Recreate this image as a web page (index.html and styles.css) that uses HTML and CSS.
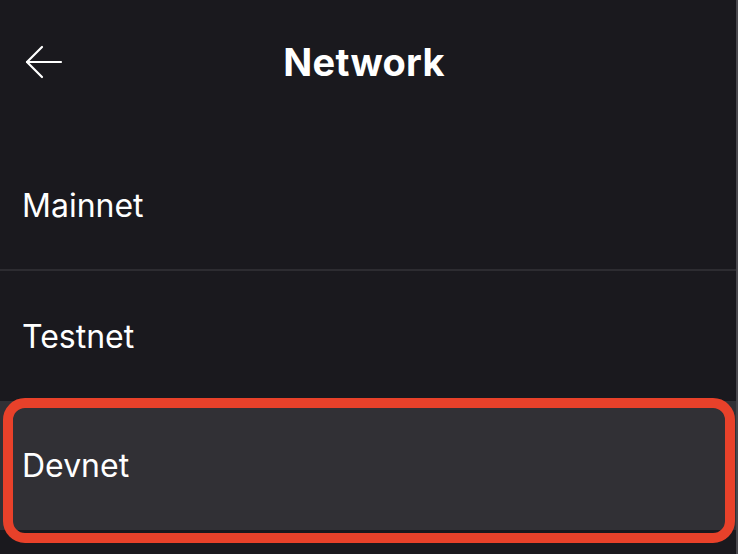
FILE: index.html
```html
<!DOCTYPE html>
<html lang="en">
<head>
<meta charset="utf-8">
<title>Network</title>
<link rel="stylesheet" href="styles.css">
</head>
<body>
<div class="page">
  <header class="header">
    <button class="back" aria-label="Back">
      <svg width="40" height="36" viewBox="0 0 40 36" fill="none" stroke="#ffffff" stroke-width="2.2" stroke-linecap="round" stroke-linejoin="round">
        <path d="M3 18 H37"/>
        <path d="M18 3 L3 18 L18 33"/>
      </svg>
    </button>
    <h1 class="title">Network</h1>
  </header>
  <ul class="list">
    <li class="row row-divided">Mainnet</li>
    <li class="row">Testnet</li>
    <li class="row row-selected">Devnet</li>
  </ul>
</div>
</body>
</html>
```
FILE: styles.css
```css
* { box-sizing: border-box; }
html, body {
  margin: 0;
  padding: 0;
  background: #1a191e;
}
body {
  font-family: Inter, "Noto Sans", "Liberation Sans", sans-serif;
  color: #ffffff;
  overflow: hidden;
}
.page {
  width: 738px;
  height: 554px;
  border-right: 2px solid #4a494e;
  background: #1a191e;
}
.header {
  position: relative;
  height: 124px;
  display: flex;
  align-items: center;
  justify-content: center;
}
.back {
  position: absolute;
  left: 24px;
  top: 44px;
  background: none;
  border: 0;
  padding: 0;
  display: flex;
}
.title {
  margin: 0 0 0 -8px;
  font-size: 38px;
  font-weight: 700;
  letter-spacing: 0.3px;
  line-height: 1;
}
.list {
  list-style: none;
  margin: 17px 0 0;
  padding: 0;
}
.row {
  height: 130px;
  display: flex;
  align-items: center;
  padding-left: 22px;
  font-size: 32px;
  font-weight: 400;
}
.row-divided {
  border-bottom: 2px solid #2d2c31;
}
.row-selected {
  position: relative;
  height: 129px;
  background: #313035;
}
.row-selected::after {
  content: "";
  position: absolute;
  top: -3px;
  left: 3px;
  right: 1px;
  bottom: -13px;
  border: 10px solid #e8412a;
  border-radius: 22px;
  pointer-events: none;
}
```
